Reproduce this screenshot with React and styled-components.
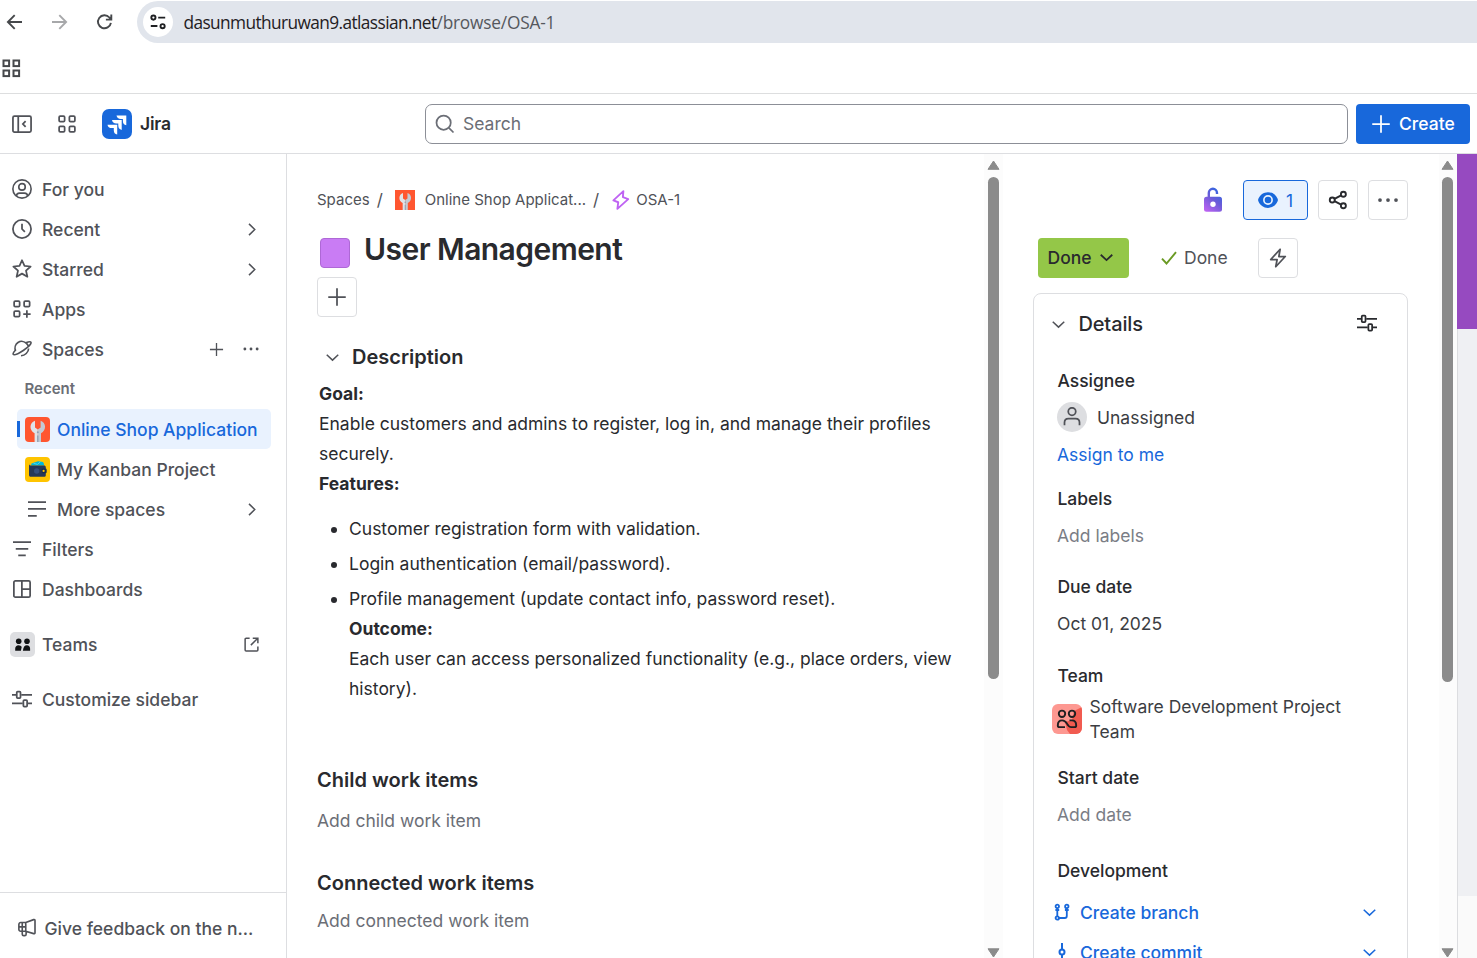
import React from "react";
import styled, { createGlobalStyle } from "styled-components";

const GlobalStyle = createGlobalStyle`
  * { box-sizing: border-box; }
  html, body { margin: 0; padding: 0; }
  body {
    width: 1477px; height: 958px; overflow: hidden; background: #fff;
    font-family: Inter, "Liberation Sans", sans-serif;
    font-size: 17.5px; color: #292a2e;
  }
  svg { display: block; flex: none; }
  p, h1, h2, ul { margin: 0; padding: 0; }
`;

/* ---------- icons ---------- */
const Stroke = ({ size = 20, box = 16, w = 1.5, color = "currentColor", children }) => (
  <svg width={size} height={size} viewBox={`0 0 ${box} ${box}`} fill="none" stroke={color} strokeWidth={w}>
    {children}
  </svg>
);
const BackIcon = () => (
  <Stroke box={20} w={1.9}><path d="M17 10H3.2M9.7 3.2 2.9 10l6.8 6.8" /></Stroke>
);
const ForwardIcon = () => (
  <Stroke box={20} w={1.9}><path d="M2 10h13.8M9.3 3.2l6.8 6.8-6.8 6.8" /></Stroke>
);
const ReloadIcon = () => (
  <Stroke box={20} w={1.9}><path d="M15.9 10.8A6.5 6.5 0 1 1 14.4 5.5L16.3 7.4M16.3 2.4v5.2h-5.4" /></Stroke>
);
const TuneIcon = () => (
  <Stroke box={20} w={1.9} color="#1f2023">
    <circle cx="5.4" cy="5.6" r="2.1" /><path d="M10.2 5.6h7M2.8 14h6.6" /><circle cx="14.6" cy="14.2" r="2.1" />
  </Stroke>
);
const BookmarkGridIcon = () => (
  <Stroke box={20} w={2}>
    <rect x="2.5" y="2.5" width="5.6" height="5.6" /><rect x="12.5" y="2.5" width="5.6" height="5.6" />
    <rect x="2.5" y="12.5" width="5.6" height="5.6" /><rect x="12.5" y="12.5" width="5.6" height="5.6" />
  </Stroke>
);
const CollapseIcon = () => (
  <Stroke w={1.4}>
    <rect x=".75" y="1.75" width="14.5" height="12.7" rx="1.2" /><path d="M5 1.8v12.6M10.9 5.7 8.7 8l2.2 2.3" />
  </Stroke>
);
const SwitcherIcon = () => (
  <Stroke w={1.4}>
    <rect x="1.7" y="1.7" width="4.4" height="4.4" rx=".9" /><rect x="9.9" y="1.7" width="4.4" height="4.4" rx=".9" />
    <rect x="1.7" y="9.9" width="4.4" height="4.4" rx=".9" /><rect x="9.9" y="9.9" width="4.4" height="4.4" rx=".9" />
  </Stroke>
);
const JiraLogo = () => (
  <svg width="30" height="30" viewBox="0 0 30 30">
    <rect width="30" height="30" rx="7" fill="#1868db" />
    <g fill="#fff">
      <path d="M14.5 6.5h9.8v9.8c-2.2-.4-3.4-1.9-3.4-4.3V9.9h-2.1c-2.3 0-3.9-1.1-4.3-3.4z" />
      <path d="M10 11.1h9.7v9.8c-2.2-.4-3.4-1.9-3.4-4.3v-2.1h-2c-2.4 0-4-1.1-4.3-3.4z" />
      <path d="M5.5 15.7h9.7v9.8c-2.2-.4-3.4-1.9-3.4-4.3v-2.1h-2c-2.4 0-4-1.1-4.3-3.4z" />
    </g>
  </svg>
);
const SearchIcon = () => (
  <Stroke w={1.4}><circle cx="6.9" cy="6.9" r="5.7" /><path d="m11.1 11.1 3.7 3.7" /></Stroke>
);
const PlusIcon = ({ size = 20 }) => <Stroke size={size} w={1.4}><path d="M8 1v14M1 8h14" /></Stroke>;
const UserCircleIcon = () => (
  <Stroke w={1.3}>
    <circle cx="8" cy="8" r="7.3" /><circle cx="8" cy="6.3" r="2.6" />
    <path d="M3.6 13.6c0-1.5 1.1-2.3 2.5-2.3h3.8c1.4 0 2.5.8 2.5 2.3" />
  </Stroke>
);
const ClockIcon = () => (
  <Stroke w={1.4}><circle cx="8" cy="8" r="7.25" /><path d="M8 3.8V8l2.3 2.3" /></Stroke>
);
const StarIcon = () => (
  <Stroke w={1.4}>
    <path strokeLinejoin="round" d="m8 1 2 4.5 4.9.5-3.7 3.3 1.1 4.9L8 11.7l-4.3 2.5 1.1-4.9L1.1 6 6 5.5z" />
  </Stroke>
);
const AppsIcon = () => (
  <Stroke w={1.4}>
    <rect x="1.7" y="1.7" width="4.4" height="4.4" rx=".9" /><rect x="9.7" y="1.7" width="4.4" height="4.4" rx=".9" />
    <rect x="1.7" y="9.7" width="4.4" height="4.4" rx=".9" /><path d="M11.9 9v5.9M9 12h5.9" />
  </Stroke>
);
const PlanetIcon = () => (
  <Stroke w={1.3}>
    <path d="M2.9 9.4A5.3 5.3 0 0 1 11.6 3.6" />
    <path strokeLinejoin="round" d="M11 3.1c2.2-.9 3.9-1 4.2-.4.5.9-2.1 3.7-5.9 6.3-3.8 2.5-7.6 4.2-8.3 3.3-.4-.6.4-2 1.9-3.5M11.6 3.6c1 .8 1.3 1.6 1.4 2.4" />
    <path d="M7.2 13.4c3.2-.2 6-2.7 6.1-5.8" />
  </Stroke>
);
const ChevronRight = () => <Stroke size={15} box={12} w={1.2}><path d="m4 1.5 4.6 4.5L4 10.5" /></Stroke>;
const ChevronDown = ({ w = 1.2 }) => <Stroke size={15} box={12} w={w}><path d="m1.4 3.8 4.6 4.3 4.6-4.3" /></Stroke>;
const DotsIcon = ({ size = 20, gap = 5.2, r = 1.1 }) => (
  <svg width={size} height={size} viewBox="0 0 16 16" fill="currentColor">
    <circle cx={8 - gap} cy="8" r={r} /><circle cx="8" cy="8" r={r} /><circle cx={8 + gap} cy="8" r={r} />
  </svg>
);
const WrenchTile = ({ size, radius }) => (
  <svg width={size} height={size} viewBox="0 0 25 25">
    <rect width="25" height="25" rx={radius} fill="#ff5630" />
    <path d="M10 3.8C4.3 5.5 3.9 13.5 9.6 16.3V25h3.2V12.4L10 10.5z" fill="#dfe3e8" />
    <path d="M15.6 3.8c5.7 1.7 6.1 9.7.4 12.5V25h-3.2V12.4l2.8-1.9z" fill="#c3cad3" />
    <circle cx="12.8" cy="15.3" r="1" fill="#8fa0b3" />
    <path d="M12.8 18.5V25" stroke="#8fa0b3" strokeWidth="1.3" />
  </svg>
);
const WalletTile = () => (
  <svg width="25" height="25" viewBox="0 0 25 25">
    <rect width="25" height="25" rx="4" fill="#ffc400" />
    <path d="m6.5 6.5 6.5-2.3 5 .7 1 2.1v1.5H6z" fill="#00b8d9" />
    <path d="m8.5 6.3 4 1 3-2.6" stroke="#4fd5ea" strokeWidth="1" fill="none" />
    <path d="M4 6.2c0 1.5.5 2.2 1.5 2.2H19c1 0 1.8.6 1.8 1.7v8.1c0 1-.7 1.6-1.8 1.6H5.8C4.7 19.8 4 19.2 4 18z" fill="#253858" />
    <circle cx="11.7" cy="14" r="2.7" fill="#344f7d" />
    <rect x="16.7" y="11.5" width="5" height="4.8" rx="1.3" fill="#172b4d" />
    <circle cx="18.6" cy="13.9" r="1.1" fill="#ffc400" />
  </svg>
);
const ListIcon = () => <Stroke w={1.4}><path d="M.8 2.5h14.4M.8 7.9h14.4M.8 13.4h7" /></Stroke>;
const FilterIcon = () => <Stroke w={1.4}><path d="M.8 2.5h14.4M3 7.9h10M5 13.1h6" /></Stroke>;
const DashboardIcon = () => (
  <Stroke w={1.4}><rect x="1.5" y="1.5" width="13" height="13" rx="1.2" /><path d="M7.9 1.5v13M7.9 8h6.6" /></Stroke>
);
const TeamsTile = () => (
  <svg width="25" height="25" viewBox="0 0 25 25">
    <rect width="25" height="25" rx="5" fill="#dddee1" />
    <g fill="#101214">
      <circle cx="8.7" cy="9.2" r="2.8" /><circle cx="17" cy="9.2" r="2.8" />
      <path d="M5.2 18.7v-2.2c0-2 1.4-3.3 3.3-3.3 1.5 0 2.7.7 3.2 1.9l-.8 3.6zM12.9 18.7c.5-3.7 1.7-5.5 4-5.5 2 0 3.2 1.3 3.2 3.3v2.2z" />
    </g>
  </svg>
);
const ExternalIcon = () => (
  <Stroke size={15} box={12} w={1.2}>
    <path d="M4.5 1H1.7c-.5 0-.8.3-.8.8v8.6c0 .5.3.8.8.8h8.6c.5 0 .8-.3.8-.8V7.5M7 .9h4.1V5M11 1 5.5 6.5" />
  </Stroke>
);
const SlidersIcon = () => (
  <Stroke size={22} box={17.6} w={1.4}>
    <path d="M.8 5.4h3.7M8.2 5.4h8.6M.8 12.3h8.6M13 12.3h3.8" />
    <rect x="4.6" y="2.8" width="3" height="5.2" rx=".7" /><rect x="9.9" y="9.7" width="3" height="5.2" rx=".7" />
  </Stroke>
);
const MegaphoneIcon = () => (
  <Stroke w={1.3}>
    <path strokeLinejoin="round" d="M7 3.6 13.3 1.3c.6-.2 1.1.1 1.1.7v9.8c0 .6-.5.9-1.1.7L7 10.6H3c-.8 0-1.5-.6-1.5-1.5v-4c0-.9.7-1.5 1.5-1.5h4v7M4.2 10.6v2.3c0 .7.5 1.2 1.2 1.2h.7c.7 0 1.2-.5 1.2-1.2v-2.3M4.2 3.6v7M1.6 7.1H7" />
  </Stroke>
);
const BoltIcon = ({ w = 1.4 }) => (
  <Stroke w={w}><path strokeLinejoin="round" d="M9.7 1 2.2 9.2H7.3L6.2 15l7.6-8.2H8.7z" /></Stroke>
);
const EpicBoltIcon = () => (
  <Stroke w={1.5}><path strokeLinejoin="round" d="M9.9.9 1.9 8.3l3.9 1.5L5.1 15.1l8.7-7.8-4.3-1.6z" /></Stroke>
);
const LockIcon = () => (
  <svg width="20" height="26" viewBox="0 0 20 26" fill="none">
    <defs>
      <linearGradient id="lockFill" x1="2" y1="24" x2="18" y2="4" gradientUnits="userSpaceOnUse">
        <stop stopColor="#bf63f3" /><stop offset=".55" stopColor="#6c5bd8" /><stop offset="1" stopColor="#2f66e0" />
      </linearGradient>
    </defs>
    <path d="M5.8 11V5.9a4.1 4.1 0 0 1 8.2 0V7" stroke="url(#lockFill)" strokeWidth="2.4" />
    <rect x="1" y="9.8" width="18" height="15" rx="2.5" fill="url(#lockFill)" />
    <circle cx="10" cy="17.3" r="2.7" fill="#fff" />
  </svg>
);
const EyeIcon = () => (
  <svg width="20" height="20" viewBox="0 0 16 16">
    <path d="M8 1.7c3.6 0 6.4 2.2 7.7 5.3.3.7.3 1.3 0 2C14.4 12.1 11.6 14.3 8 14.3S1.6 12.1.3 9C0 8.3 0 7.7.3 7 1.6 3.9 4.4 1.7 8 1.7z" fill="currentColor" />
    <circle cx="8" cy="8" r="3.3" fill="currentColor" stroke="#e9f2fe" strokeWidth="1.3" />
  </svg>
);
const ShareIcon = () => (
  <Stroke w={1.5}>
    <circle cx="3.4" cy="8" r="2" /><circle cx="12.3" cy="3.4" r="2" /><circle cx="12.3" cy="12.6" r="2" />
    <path d="m5.2 7.1 5.3-2.8M5.2 8.9l5.3 2.8" />
  </Stroke>
);
const CheckIcon = () => <Stroke size={16} w={1.9} color="#6a9a23"><path d="m1 8.7 4.5 4.8L15 2.2" /></Stroke>;
const PersonIcon = () => (
  <Stroke w={1.4}><circle cx="8" cy="3.6" r="3" /><path d="M2 14.5v-2.2c0-1.8 1.3-3.1 3.1-3.1h5.8c1.8 0 3.1 1.3 3.1 3.1v2.2" /></Stroke>
);
const TeamTile = () => (
  <svg width="30" height="30" viewBox="0 0 30 30" fill="none">
    <defs><clipPath id="teamClip"><rect width="30" height="30" rx="6" /></clipPath></defs>
    <g clipPath="url(#teamClip)">
      <rect width="30" height="30" fill="#fd9891" />
      <path d="M30 3 22 7l-2 9-7 2 2 8 3 4h12z" fill="#f15b50" />
    </g>
    <g stroke="#1f1f21" strokeWidth="1.9">
      <circle cx="10" cy="9.8" r="3.2" /><circle cx="20" cy="9.8" r="3.2" />
      <path d="M13 23.1H7.5c-1.1 0-1.7-.7-1.7-1.7 0-3.2 1.6-5 4.4-5 2.3 0 3.5 1.2 4.7 3.2 1.3 2.3 2.2 3.5 4.4 3.5h3.2c1.1 0 1.7-.7 1.7-1.7 0-3.2-1.6-5-4.4-5h-2.3" />
    </g>
  </svg>
);
const BranchIcon = () => (
  <Stroke size={18} box={18} w={1.8}>
    <circle cx="4.3" cy="3.4" r="1.7" /><circle cx="13.8" cy="3.4" r="1.7" /><circle cx="4.3" cy="15" r="1.7" />
    <path d="M4.3 5.1v8.2M6 15h5.8c1.2 0 2-.8 2-2V5.1M2.4 7h3.8M11.9 7h3.8" />
  </Stroke>
);
const CommitIcon = () => (
  <Stroke size={18} box={18} w={2}><circle cx="9" cy="9" r="2.5" /><path d="M9-1v7.5M9 11.5V19" /></Stroke>
);

/* ---------- browser chrome ---------- */
const Browser = styled.header`
  height: 94px; border-bottom: 1px solid #dddedf; background: #fff; color: #46484b;
`;
const AddressRow = styled.div`display: flex; align-items: center; height: 43px; padding: 1px 0 0 5px;`;
const NavIcons = styled.div`display: flex; gap: 25px; width: 132px;`;
const NavIcon = styled.span`color: ${(p) => (p.$off ? "#a7a8aa" : "#46484b")};`;
const Omnibox = styled.div`
  flex: 1; height: 42px; display: flex; align-items: center; padding-left: 6px; gap: 10.5px;
  background: #e1e5ec; border-radius: 21px 0 0 21px;
`;
const SiteInfo = styled.span`
  width: 30px; height: 30px; border-radius: 50%; background: #fff; display: grid; place-items: center;
`;
const Url = styled.span`
  font: 17.3px/24px "Open Sans", "Noto Sans", sans-serif; letter-spacing: -0.6px; color: #1f2023; white-space: nowrap;
  padding-top: 2px;
  span { color: #55585d; letter-spacing: -0.2px; }
`;
const BookmarkRow = styled.div`height: 50px; display: flex; align-items: center; padding-left: 1px;`;

/* ---------- app header ---------- */
const TopBar = styled.div`
  height: 60px; display: flex; align-items: center; border-bottom: 1px solid #dddee1; padding: 0 7px 0 12px; color: #505258;
`;
const TopLeft = styled.div`width: 413px; display: flex; align-items: center; gap: 25px;`;
const Brand = styled.div`
  display: flex; align-items: center; gap: 8px; color: #292a2e; font-weight: 600; font-size: 17.5px; letter-spacing: -0.2px;
`;
const SearchBox = styled.div`
  flex: 1; height: 40px; border: 1px solid #8c8f97; border-radius: 7px; display: flex; align-items: center;
  gap: 8px; padding-left: 9px; color: #6b6e76;
`;
const CreateButton = styled.button`
  width: 114px; height: 40px; margin-left: 8px; border: 0; border-radius: 4px; background: #1868db; color: #fff;
  font: 500 17.5px Inter, sans-serif; display: flex; align-items: center; gap: 8px; padding: 0 0 0 15px;
`;

/* ---------- sidebar ---------- */
const Workspace = styled.div`display: flex; height: 804px; overflow: hidden;`;
const Sidebar = styled.nav`
  width: 287px; border-right: 1px solid #dddee1; display: flex; flex-direction: column; padding-top: 15px; color: #505258;
`;
const Item = styled.div`
  position: relative; height: 40px; flex: none; display: flex; align-items: center; gap: ${(p) => p.$gap ?? 10}px;
  margin: ${(p) => p.$top ?? 0}px 15px 0 ${(p) => (p.$nested ? 17 : 0)}px;
  padding-left: ${(p) => p.$pad ?? 12}px; border-radius: 5px; font-weight: 500; white-space: nowrap;
  ${(p) => p.$selected && `
    background: #e9f2fe; color: #1868db;
    &::before { content: ""; position: absolute; left: 0; top: 12px; width: 3px; height: 16px; background: #1868db; }
  `}
`;
const Actions = styled.span`margin-left: auto; display: flex; align-items: center; gap: 17px; padding-right: ${(p) => p.$end ?? 12}px;`;
const GroupLabel = styled.div`height: 40px; padding-left: 24.5px; font: 600 15px/40px Inter, sans-serif; color: #6b6e76;`;
const Feedback = styled.div`
  margin-top: auto; height: 66px; border-top: 1px solid #dddee1; display: flex; align-items: center; gap: 7.5px;
  padding: 5px 0 0 17px; font-weight: 500;
`;

/* ---------- scrollbar ---------- */
const Track = styled.div`
  width: ${(p) => p.$width}px; flex: none; background: #fcfcfc; display: flex; flex-direction: column; align-items: center;
  padding: 6px ${(p) => p.$inset ?? 0}px 0 0; color: #8b8b8b;
`;
const Thumb = styled.div`width: 11px; height: ${(p) => p.$height}px; margin: 7px 0 auto; border-radius: 6px; background: #8b8b8b;`;
const Scrollbar = ({ height, width, inset }) => (
  <Track $width={width} $inset={inset}>
    <svg width="13" height="10" viewBox="0 0 13 10"><path d="M6.5 1 12 9.3H1z" fill="currentColor" stroke="currentColor" strokeLinejoin="round" /></svg>
    <Thumb $height={height} />
    <svg width="13" height="10" viewBox="0 0 13 10"><path d="M6.5 9 12 .8H1z" fill="currentColor" stroke="currentColor" strokeLinejoin="round" /></svg>
  </Track>
);

/* ---------- issue body ---------- */
const Main = styled.main`width: 697px; flex: none; padding: 31px 20px 0 30px; overflow: hidden;`;
const Breadcrumbs = styled.div`
  height: 30px; display: flex; align-items: center; font-size: 15px; line-height: 20px; padding-bottom: 1px; color: #505258; white-space: nowrap;
`;
const Slash = styled.span`margin: 0 ${(p) => p.$after}px 0 7px; font-size: 17px;`;
const CrumbIcon = styled.span`margin-right: ${(p) => p.$after}px; color: ${(p) => p.$color ?? "inherit"};`;
const TitleRow = styled.div`display: flex; height: 62px; padding: 16px 0 0 3px; gap: 14px;`;
const ColorSwatch = styled.span`
  width: 30px; height: 30px; margin-top: 7px; border-radius: 4px; background: #c97cf4; border: 1px solid #ae68d6;
`;
const Title = styled.h1`font-size: 30px; font-weight: 640; line-height: 36px; letter-spacing: -0.55px; white-space: nowrap;`;
const SquareButton = styled.button`
  width: 40px; height: 40px; border: 1px solid #dddee1; border-radius: 4px; background: #fff; padding: 0;
  display: grid; place-items: center; color: ${(p) => p.$color ?? "#505258"};
`;
const SectionHead = styled.div`
  display: flex; align-items: center; gap: 12px; height: 30px; margin-top: 25px; padding-left: 8px; color: #505258;
`;
const Heading = styled.h2`
  font-size: 20px; font-weight: 600; line-height: 30px; color: #292a2e; margin-top: ${(p) => p.$top ?? 0}px;
`;
const RichText = styled.div`
  margin-top: 7px; padding-left: 2px; line-height: 30px;
  p { white-space: nowrap; }
  strong { font-weight: 650; }
  ul { margin-top: 15px; padding-left: 30px; }
  li + li { margin-top: 5px; }
`;
const Hint = styled.p`line-height: 30px; margin-top: ${(p) => p.$top}px; color: #6b6e76;`;

/* ---------- details panel ---------- */
const Panel = styled.aside`width: 436px; flex: none; padding: 26px 31px 0 30px; overflow: hidden;`;
const ToolRow = styled.div`display: flex; justify-content: flex-end; align-items: center; gap: 10px;`;
const LockSlot = styled.span`margin-right: 10px;`;
const WatchButton = styled.button`
  width: 65px; height: 40px; border: 1px solid #1868db; border-radius: 4px; background: #e9f2fe; color: #1868db;
  display: flex; align-items: center; gap: 8px; padding: 0 0 0 14px; font: 400 17.5px Inter, sans-serif;
`;
const StatusRow = styled.div`display: flex; align-items: center; margin-top: 18px; padding-left: 5px; line-height: 20px;`;
const StatusButton = styled.button`
  width: 91px; height: 40px; border: 0; border-radius: 4px; background: #94c748; color: #292a2e;
  font: 500 17.5px/20px Inter, sans-serif; display: flex; align-items: center; gap: 7px; padding: 0 0 1px 9.5px;
`;
const Resolution = styled.span`
  display: flex; align-items: center; gap: 7px; width: 97px; margin-left: 32px; padding-bottom: 1px; color: #505258;
`;
const Card = styled.section`
  width: 375px; height: 700px; margin-top: 15px; border: 1px solid #dddee1; border-radius: 8px; padding-left: 23.4px;
`;
const CardHead = styled.div`
  height: 60px; display: flex; align-items: center; gap: 12px; margin-left: -6px; padding-right: 29px;
  font-size: 20px; font-weight: 500; letter-spacing: -0.1px;
`;
const CardTools = styled.span`margin-left: auto; padding-bottom: 2px;`;
const Muted = styled.span`color: #505258;`;
const Label = styled.div`line-height: 24px; margin-top: ${(p) => p.$top}px; font-weight: 500; color: #292a2e;`;
const Value = styled.div`
  display: flex; align-items: center; gap: ${(p) => p.$gap ?? 0}px; margin: ${(p) => p.$top ?? 13}px 0 0 ${(p) => p.$left ?? -0.4}px;
  line-height: ${(p) => p.$line ?? 24}px; color: ${(p) => p.$color ?? "#3b3d42"};
`;
const Avatar = styled.span`
  width: 30px; height: 30px; border-radius: 50%; background: #dddee1; display: grid; place-items: center; color: #505258;
  margin-top: -2px;
`;
const DevLink = styled.div`
  height: 40px; display: flex; align-items: center; gap: 9px; margin: ${(p) => p.$top ?? 0}px 30px 0 -4.4px;
  font-weight: 500; color: #1868db;
  svg:last-child { margin-left: auto; }
`;

/* ---------- right edge ---------- */
const Edge = styled.div`
  flex: 1; border-left: 1px solid #dcdde0; display: flex; flex-direction: column; background: #fafafa;
`;
const PurpleStrip = styled.div`height: 175px; margin-left: -1px; background: #964ac0;`;
const GreyStrip = styled.div`height: 567px; background: #eff0f3;`;

export default function App() {
  return (
    <>
      <GlobalStyle />
      <Browser>
        <AddressRow>
          <NavIcons>
            <NavIcon><BackIcon /></NavIcon>
            <NavIcon $off><ForwardIcon /></NavIcon>
            <NavIcon><ReloadIcon /></NavIcon>
          </NavIcons>
          <Omnibox>
            <SiteInfo><TuneIcon /></SiteInfo>
            <Url>dasunmuthuruwan9.atlassian.net<span>/browse/OSA-1</span></Url>
          </Omnibox>
        </AddressRow>
        <BookmarkRow><BookmarkGridIcon /></BookmarkRow>
      </Browser>

      <TopBar>
        <TopLeft>
          <CollapseIcon />
          <SwitcherIcon />
          <Brand><JiraLogo />Jira</Brand>
        </TopLeft>
        <SearchBox><SearchIcon />Search</SearchBox>
        <CreateButton><PlusIcon />Create</CreateButton>
      </TopBar>

      <Workspace>
        <Sidebar>
          <Item><UserCircleIcon />For you</Item>
          <Item><ClockIcon />Recent<Actions><ChevronRight /></Actions></Item>
          <Item><StarIcon />Starred<Actions><ChevronRight /></Actions></Item>
          <Item><AppsIcon />Apps</Item>
          <Item><PlanetIcon />Spaces<Actions $end={10}><PlusIcon size={15} /><DotsIcon gap={4.9} r={1.15} /></Actions></Item>
          <GroupLabel>Recent</GroupLabel>
          <Item $nested $selected $pad={8} $gap={7}><WrenchTile size={25} radius={4} />Online Shop Application</Item>
          <Item $nested $pad={8} $gap={7}><WalletTile />My Kanban Project</Item>
          <Item $nested $pad={10} $gap={10}><ListIcon />More spaces<Actions><ChevronRight /></Actions></Item>
          <Item><FilterIcon />Filters</Item>
          <Item><DashboardIcon />Dashboards</Item>
          <Item $top={15} $pad={10} $gap={7}><TeamsTile />Teams<Actions><ExternalIcon /></Actions></Item>
          <Item $top={15} $pad={11} $gap={9}><SlidersIcon />Customize sidebar</Item>
          <Feedback><MegaphoneIcon />Give feedback on the n...</Feedback>
        </Sidebar>

        <Main>
          <Breadcrumbs>
            Spaces<Slash $after={12}>/</Slash>
            <CrumbIcon $after={10}><WrenchTile size={20} radius={0} /></CrumbIcon>
            Online Shop Applicat...<Slash $after={12}>/</Slash>
            <CrumbIcon $after={5} $color="#bf63f3"><EpicBoltIcon /></CrumbIcon>OSA-1
          </Breadcrumbs>
          <TitleRow><ColorSwatch /><Title>User Management</Title></TitleRow>
          <SquareButton><PlusIcon /></SquareButton>
          <SectionHead><ChevronDown /><Heading>Description</Heading></SectionHead>
          <RichText>
            <p><strong>Goal:</strong></p>
            <p>Enable customers and admins to register, log in, and manage their profiles</p>
            <p>securely.</p>
            <p><strong>Features:</strong></p>
            <ul>
              <li>Customer registration form with validation.</li>
              <li>Login authentication (email/password).</li>
              <li>
                <p>Profile management (update contact info, password reset).</p>
                <p><strong>Outcome:</strong></p>
                <p>Each user can access personalized functionality (e.g., place orders, view</p>
                <p>history).</p>
              </li>
            </ul>
          </RichText>
          <Heading $top={61}>Child work items</Heading>
          <Hint $top={11}>Add child work item</Hint>
          <Heading $top={32}>Connected work items</Heading>
          <Hint $top={8}>Add connected work item</Hint>
        </Main>
        <Scrollbar width={19} height={502} />

        <Panel>
          <ToolRow>
            <LockSlot><LockIcon /></LockSlot>
            <WatchButton><EyeIcon />1</WatchButton>
            <SquareButton $color="#292a2e"><ShareIcon /></SquareButton>
            <SquareButton><DotsIcon gap={6.4} r={1.5} /></SquareButton>
          </ToolRow>
          <StatusRow>
            <StatusButton>Done<ChevronDown w={1.4} /></StatusButton>
            <Resolution><CheckIcon />Done</Resolution>
            <SquareButton><BoltIcon /></SquareButton>
          </StatusRow>
          <Card>
            <CardHead><Muted><ChevronDown /></Muted>Details<CardTools><SlidersIcon /></CardTools></CardHead>
            <Label $top={15}>Assignee</Label>
            <Value $top={11} $gap={10} $line={28}><Avatar><PersonIcon /></Avatar>Unassigned</Value>
            <Value $top={11} $color="#1868db">Assign to me</Value>
            <Label $top={20}>Labels</Label>
            <Value $color="#7a7d85">Add labels</Value>
            <Label $top={27}>Due date</Label>
            <Value>Oct 01, 2025</Value>
            <Label $top={28}>Team</Label>
            <Value $top={6} $left={-5.4} $gap={7.5} $line={25}>
              <TeamTile />
              <span>Software Development Project<br />Team</span>
            </Value>
            <Label $top={22}>Start date</Label>
            <Value $color="#7a7d85">Add date</Value>
            <Label $top={32}>Development</Label>
            <DevLink $top={9}><BranchIcon />Create branch<ChevronDown /></DevLink>
            <DevLink><CommitIcon />Create commit<ChevronDown /></DevLink>
          </Card>
        </Panel>
        <Scrollbar width={18} height={505} inset={1} />
        <Edge>
          <PurpleStrip />
          <GreyStrip />
        </Edge>
      </Workspace>
    </>
  );
}
